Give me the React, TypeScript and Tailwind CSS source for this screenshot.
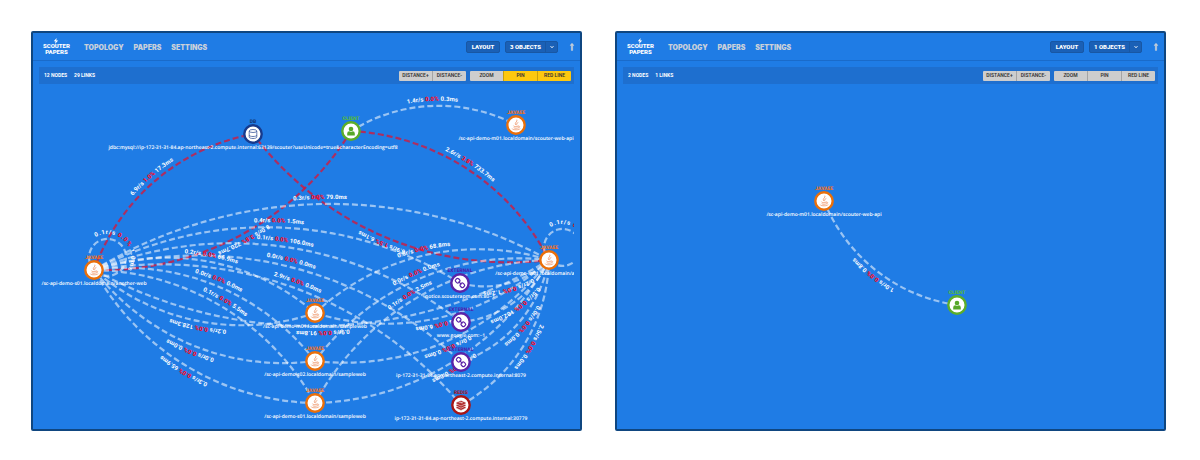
import { FaChevronDown, FaLongArrowAltUp } from "react-icons/fa";

type Kind = "DB" | "CLIENT" | "JAVAEE" | "EXTERNAL" | "REDIS";

interface TopologyNode {
  id: string;
  kind: Kind;
  x: number;
  y: number;
  name?: string;
}

interface TopologyLink {
  from: string;
  to: string;
  rate: string;
  error: string;
  time: string;
  alert?: boolean;
}

interface Topology {
  id: string;
  objects: number;
  active: string[];
  viewBox: string;
  nodes: TopologyNode[];
  links: TopologyLink[];
}

const KIND_STROKE: Record<Kind, string> = {
  DB: "stroke-[#173a8c]",
  CLIENT: "stroke-[#5cad2a]",
  JAVAEE: "stroke-[#ea6f0a]",
  EXTERNAL: "stroke-[#5b23a8]",
  REDIS: "stroke-[#a81616]",
};

const KIND_FILL: Record<Kind, string> = {
  DB: "fill-[#123a7c]",
  CLIENT: "fill-[#54b83a]",
  JAVAEE: "fill-[#f07020]",
  EXTERNAL: "fill-[#4a24b0]",
  REDIS: "fill-[#a01830]",
};

const link = (from: string, to: string, rate: string, error: string, time: string, alert = false): TopologyLink => ({
  from,
  to,
  rate,
  error,
  time,
  alert,
});

const OVERVIEW: Topology = {
  id: "overview",
  objects: 3,
  active: ["PIN", "RED LINE"],
  viewBox: "39 84 535 345",
  nodes: [
    { id: "db", kind: "DB", x: 253, y: 134, name: "jdbc:mysql://ip-172-31-31-84.ap-northeast-2.compute.internal:63139/scouter?useUnicode=true&characterEncoding=utf8" },
    { id: "client", kind: "CLIENT", x: 351, y: 131 },
    { id: "api", kind: "JAVAEE", x: 516, y: 125, name: "/sc-api-demo-m01.localdomain/scouter-web-api" },
    { id: "left", kind: "JAVAEE", x: 94, y: 270, name: "/sc-api-demo-s01.localdomain/another-web" },
    { id: "right", kind: "JAVAEE", x: 549, y: 260, name: "/sc-api-demo-m01.localdomain/another-web" },
    { id: "s1", kind: "JAVAEE", x: 315, y: 313, name: "/sc-api-demo-m01.localdomain/sampleweb" },
    { id: "s2", kind: "JAVAEE", x: 315, y: 361, name: "/sc-api-demo-s02.localdomain/sampleweb" },
    { id: "s3", kind: "JAVAEE", x: 315, y: 403, name: "/sc-api-demo-s01.localdomain/sampleweb" },
    { id: "e1", kind: "EXTERNAL", x: 460, y: 283, name: "notice.scouterapm.com:80~1" },
    { id: "e2", kind: "EXTERNAL", x: 461, y: 322, name: "www.google.com:~1" },
    { id: "e3", kind: "EXTERNAL", x: 461, y: 362, name: "ip-172-31-31-84.ap-northeast-2.compute.internal:8079" },
    { id: "redis", kind: "REDIS", x: 461, y: 405, name: "ip-172-31-31-84.ap-northeast-2.compute.internal:30779" },
  ],
  links: [
    link("left", "db", "6.9r/s", "1.0%", "17.3ms", true),
    link("right", "db", "6.9r/s", "1.5%", "6.1ms", true),
    link("client", "api", "1.4r/s", "0.0%", "0.3ms"),
    link("client", "right", "2.6r/s", "3.8%", "733.7ms", true),
    link("client", "left", "8.0r/s", "3.8%", "720.7ms", true),
    link("left", "right", "0.3r/s", "0.0%", "79.0ms"),
    link("left", "e1", "0.4r/s", "0.0%", "1.5ms"),
    link("left", "e2", "0.1r/s", "0.0%", "106.0ms"),
    link("left", "e3", "0.0r/s", "0.0%", "0.0ms"),
    link("left", "redis", "2.9r/s", "0.0%", "0.0ms"),
    link("left", "s1", "0.2r/s", "0.0%", "66.9ms"),
    link("left", "s2", "0.0r/s", "0.0%", "0.0ms"),
    link("left", "s3", "0.1r/s", "0.0%", "5.5ms"),
    link("s1", "left", "0.2r/s", "0.0%", "128.3ms"),
    link("s2", "left", "0.0r/s", "0.0%", "0.0ms"),
    link("s3", "left", "0.3r/s", "0.0%", "65.9ms"),
    link("s1", "right", "0.3r/s", "0.0%", "68.8ms"),
    link("s2", "right", "0.0r/s", "0.0%", "0.0ms"),
    link("s3", "right", "0.1r/s", "0.0%", "2.5ms"),
    link("right", "s1", "0.0r/s", "0.0%", "6.0ms"),
    link("right", "s2", "0.0r/s", "0.0%", "0.0ms"),
    link("right", "s3", "0.1r/s", "0.0%", "0.0ms"),
    link("right", "e1", "0.2r/s", "0.0%", "1.2ms"),
    link("right", "e2", "0.5r/s", "0.0%", "102.0ms"),
    link("right", "e3", "0.0r/s", "0.0%", "0.0ms"),
    link("right", "redis", "2.5r/s", "0.0%", "0.0ms"),
    link("right", "left", "0.9r/s", "0.0%", "91.8ms"),
    link("left", "left", "0.1r/s", "0.0%", "1.0ms"),
    link("right", "right", "0.1r/s", "0.0%", "1.0ms"),
  ],
};

const SINGLE: Topology = {
  id: "single",
  objects: 1,
  active: [],
  viewBox: "623 84 535 345",
  nodes: [
    { id: "api", kind: "JAVAEE", x: 824, y: 201, name: "/sc-api-demo-m01.localdomain/scouter-web-api" },
    { id: "client", kind: "CLIENT", x: 957, y: 305 },
  ],
  links: [link("client", "api", "1.0r/s", "0.0%", "0.8ms")],
};

function arc(a: TopologyNode, b: TopologyNode) {
  if (a === b) {
    return `M${a.x},${a.y} A18.5,18.5 0 1,1 ${a.x + 1},${a.y + 1}`;
  }
  const r = Math.hypot(b.x - a.x, b.y - a.y);
  return `M${a.x},${a.y} A${r},${r} 0 0,1 ${b.x},${b.y}`;
}

function KindIcon({ kind, x, y }: { kind: Kind; x: number; y: number }) {
  switch (kind) {
    case "JAVAEE":
      return (
        <g transform={`translate(${x} ${y})`} fill="none" stroke="#ee9468" strokeWidth="0.8" strokeLinecap="round">
          <path d="M1,-5 C2.2,-3.4 -2,-2.6 -0.6,-0.4 M2,-2.4 C0.2,-1.6 0.4,-0.9 0.8,0" />
          <path d="M-2.6,1 C-3,1.9 2.4,1.8 2.8,1 M-2,2.9 C-0.8,3.4 1.2,3.4 2.2,2.9 M3,1.2 C4.4,1.2 3.8,2.6 2.8,2.8" />
          <path d="M-3.8,4 C-4,5.2 3.6,5.2 4,4" />
        </g>
      );
    case "REDIS":
      return (
        <g transform={`translate(${x} ${y})`} fill="#b02a2a" stroke="#fff" strokeWidth="0.5" strokeLinejoin="round">
          <path d="M-5,2 V3 L0,5.4 L5,3 V2 L0,-0.2 Z" />
          <path d="M-5,-0.2 V0.8 L0,3.2 L5,0.8 V-0.2 L0,-2.4 Z" />
          <path d="M-5,-2.4 V-1.4 L0,1 L5,-1.4 V-2.4 L0,-4.6 Z" />
          <path d="M-2.4,-2.4 H2.2 M-0.4,-3.4 L1,-1.4" fill="none" />
        </g>
      );
    case "DB":
      return (
        <g transform={`translate(${x} ${y})`} fill="none" stroke="#3d5a9c" strokeWidth="0.8">
          <ellipse cx="0" cy="-3" rx="3.8" ry="1.5" />
          <path d="M-3.8,-3 V3 C-3.8,5 3.8,5 3.8,3 V-3 M-3.8,1 C-3.8,3 3.8,3 3.8,1" />
        </g>
      );
    case "CLIENT":
      return (
        <g transform={`translate(${x} ${y})`} fill="#57a82a">
          <circle cx="0" cy="-2" r="2.3" />
          <path d="M-3.8,4.5 V2.4 Q-3.8,0.2 -1.7,0.2 Q0,1.4 1.7,0.2 Q3.8,0.2 3.8,2.4 V4.5 Z" />
        </g>
      );
    case "EXTERNAL":
      return (
        <g transform={`translate(${x} ${y}) rotate(45)`} fill="none" stroke="#5b23a8" strokeWidth="1.2">
          <rect x="-5.4" y="-2" width="4.2" height="4" rx="1.4" />
          <rect x="1.2" y="-2" width="4.2" height="4" rx="1.4" />
          <path d="M-2,0 H2" />
        </g>
      );
  }
}

function TopologyMap({ data }: { data: Topology }) {
  const byId = new Map(data.nodes.map((n) => [n.id, n]));
  return (
    <svg viewBox={data.viewBox} className="block w-full [text-rendering:geometricPrecision]" role="img" aria-label="Topology map">
      {data.links.map((l) => {
        const id = `${data.id}-${l.from}-${l.to}`;
        return (
          <path
            key={id}
            id={id}
            d={arc(byId.get(l.from)!, byId.get(l.to)!)}
            fill="none"
            strokeWidth="2.2"
            strokeDasharray="6 3"
            className={l.alert ? "stroke-[#dc1434]/75" : "stroke-white/55"}
          />
        );
      })}
      {data.nodes.map(
        (n) =>
          n.name && (
            <text key={n.id} x={n.x} y={n.y + 15} textAnchor="middle" className="fill-white font-['Open_Sans',sans-serif] text-[5px] font-semibold">
              {n.name}
            </text>
          ),
      )}
      {data.links.map((l) => (
        <text key={`${l.from}-${l.to}`} dy="-5" textAnchor="middle" className="fill-white text-[6px] font-bold">
          <textPath href={`#${data.id}-${l.from}-${l.to}`} startOffset="50%">
            {l.rate} <tspan className="fill-[#ff0a24] font-black">{l.error}</tspan> {l.time}
          </textPath>
        </text>
      ))}
      {data.nodes.map((n) => (
        <g key={n.id}>
          <text x={n.x} y={n.y - 11} textAnchor="middle" className={`text-[5px] font-black ${KIND_FILL[n.kind]}`}>
            {n.kind}
          </text>
          <circle cx={n.x} cy={n.y} r="8.7" strokeWidth="2.4" className={`fill-white ${KIND_STROKE[n.kind]}`} />
          <KindIcon kind={n.kind} x={n.x} y={n.y} />
        </g>
      ))}
    </svg>
  );
}

function Toggle({ label, on = false }: { label: string; on?: boolean }) {
  return (
    <button
      type="button"
      aria-pressed={on}
      className={`h-full min-w-[33px] flex-1 border-l border-black/20 text-[5px] font-semibold text-[#333] first:border-l-0 ${on ? "bg-[#fdc80f]" : "bg-[#cdcdcd]"}`}
    >
      {label}
    </button>
  );
}

function Panel({ data }: { data: Topology }) {
  return (
    <section className="min-w-0 flex-1 rounded-xs border-2 border-[#0f4680] bg-[#1f7ce5]">
      <header className="flex h-7 items-center border-b border-[#1a6bca] pr-[4px] pl-[10px] text-[#c9d0da]">
        <a href="#home" className="flex flex-col items-center text-[6px] leading-[6px] font-black text-white">
          <svg viewBox="0 0 6 6" className="-mb-px size-[6px]" fill="currentColor" aria-hidden="true">
            <path d="M3.6,0 L0.8,3.2 H2.6 L2,6 L5.2,2.4 H3.3 Z" />
          </svg>
          <span>SCOUTER</span>
          <span>PAPERS</span>
        </a>
        <nav className="ml-[14px] flex gap-[10px] pt-[3px] font-['Inter',sans-serif] text-[7px] leading-[8px] font-black">
          <a href="#topology">TOPOLOGY</a>
          <a href="#papers">PAPERS</a>
          <a href="#settings">SETTINGS</a>
        </nav>
        <div className="ml-auto flex items-center gap-[5px] text-[6px] font-black text-white">
          <button type="button" className="h-3 w-[34px] rounded-xs border border-[#1857a4] bg-[#1a60b6] leading-none">
            LAYOUT
          </button>
          <div className="flex h-3 rounded-xs border border-[#1857a4] bg-[#1a60b6] leading-none">
            <button type="button" className="w-[39px]">
              {data.objects} OBJECTS
            </button>
            <button type="button" aria-label="Select objects" className="flex w-[12px] items-center justify-center border-l border-[#1857a4]">
              <FaChevronDown size={4} />
            </button>
          </div>
          <button type="button" aria-label="Scroll to top" className="ml-[5px] text-[#c9d0da]">
            <FaLongArrowAltUp size={8} stroke="currentColor" strokeWidth={40} />
          </button>
        </div>
      </header>
      <div className="px-[6px] pt-[6px]">
        <div className="flex h-[17px] items-center gap-[7px] bg-[#1e6fcf] pr-[3px] pl-[5px] text-[5px] font-bold text-white">
          <span>{data.nodes.length} NODES</span>
          <span>{data.links.length} LINKS</span>
          <div className="ml-auto flex gap-[4px]">
            <div className="flex h-[10px] w-[67px] overflow-hidden rounded-[1px]">
              <Toggle label="DISTANCE+" />
              <Toggle label="DISTANCE-" />
            </div>
            <div className="flex h-[10px] w-[101px] overflow-hidden rounded-[1px]">
              {["ZOOM", "PIN", "RED LINE"].map((label) => (
                <Toggle key={label} label={label} on={data.active.includes(label)} />
              ))}
            </div>
          </div>
        </div>
        <TopologyMap data={data} />
      </div>
    </section>
  );
}

export default function App() {
  return (
    <main className="flex min-h-screen items-start gap-[33px] bg-white pt-[31px] pr-[34px] pl-[31px] font-['Roboto',sans-serif]">
      <Panel data={OVERVIEW} />
      <Panel data={SINGLE} />
    </main>
  );
}
